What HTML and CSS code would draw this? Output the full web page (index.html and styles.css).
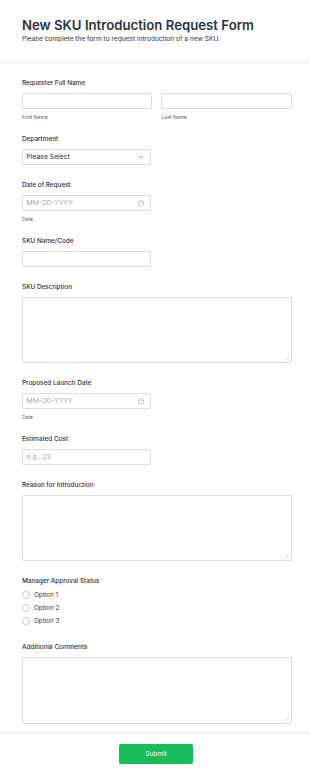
FILE: index.html
```html
<!DOCTYPE html>
<html lang="en">
<head>
<meta charset="utf-8">
<title>New SKU Introduction Request Form</title>
<link rel="stylesheet" href="styles.css">
</head>
<body>
<div class="form">
  <header class="form-header">
    <h1 class="title">New SKU Introduction Request Form</h1>
    <p class="subtitle">Please complete the form to request introduction of a new SKU.</p>
  </header>

  <ul class="fields">
    <li class="field">
      <label class="label">Requester Full Name</label>
      <div class="name-row">
        <div class="name-col">
          <input class="input full" type="text">
          <span class="sublabel">First Name</span>
        </div>
        <div class="name-col">
          <input class="input full" type="text">
          <span class="sublabel">Last Name</span>
        </div>
      </div>
    </li>

    <li class="field">
      <label class="label">Department</label>
      <div class="select half">
        <span>Please Select</span>
        <svg class="chev" width="6" height="4" viewBox="0 0 6 4"><path d="M1 1l2 2 2-2" fill="none" stroke="#7d8597" stroke-width="0.8"/></svg>
      </div>
    </li>

    <li class="field">
      <label class="label">Date of Request</label>
      <div class="date half">
        <span class="ph">MM-DD-YYYY</span>
        <svg class="cal" width="6" height="6" viewBox="0 0 6 6"><rect x="0.5" y="0.8" width="5" height="4.7" rx="0.6" fill="none" stroke="#b5bbc7" stroke-width="0.7"/><path d="M0.5 2.3h5" stroke="#b5bbc7" stroke-width="0.7"/></svg>
      </div>
      <span class="sublabel">Date</span>
    </li>

    <li class="field">
      <label class="label">SKU Name/Code</label>
      <input class="input half" type="text">
    </li>

    <li class="field">
      <label class="label">SKU Description</label>
      <textarea class="textarea"></textarea>
    </li>

    <li class="field">
      <label class="label">Proposed Launch Date</label>
      <div class="date half">
        <span class="ph">MM-DD-YYYY</span>
        <svg class="cal" width="6" height="6" viewBox="0 0 6 6"><rect x="0.5" y="0.8" width="5" height="4.7" rx="0.6" fill="none" stroke="#b5bbc7" stroke-width="0.7"/><path d="M0.5 2.3h5" stroke="#b5bbc7" stroke-width="0.7"/></svg>
      </div>
      <span class="sublabel">Date</span>
    </li>

    <li class="field">
      <label class="label">Estimated Cost</label>
      <input class="input half" type="text" placeholder="e.g., 23">
    </li>

    <li class="field">
      <label class="label">Reason for Introduction</label>
      <textarea class="textarea"></textarea>
    </li>

    <li class="field">
      <label class="label">Manager Approval Status</label>
      <div class="options">
        <div class="option"><span class="radio"></span><span>Option 1</span></div>
        <div class="option"><span class="radio"></span><span>Option 2</span></div>
        <div class="option"><span class="radio"></span><span>Option 3</span></div>
      </div>
    </li>

    <li class="field">
      <label class="label">Additional Comments</label>
      <textarea class="textarea"></textarea>
    </li>
  </ul>

  <div class="submit-row">
    <button class="submit" type="button">Submit</button>
  </div>
</div>
</body>
</html>
```

FILE: styles.css
```css
* { box-sizing: border-box; }

html, body {
  margin: 0;
  padding: 0;
  background: #ffffff;
}

body {
  font-family: Inter, "Noto Sans", "Liberation Sans", sans-serif;
  color: #2c3345;
}

.form {
  width: 310px;
}

.form-header {
  padding: 16px 19px 18px 22px;
  border-bottom: 1px solid #eceef3;
}

.title {
  margin: 0 0 1px;
  font-size: 13.2px;
  line-height: 18px;
  font-weight: 600;
  color: #2c3345;
  letter-spacing: 0;
}

.subtitle {
  margin: 0;
  font-size: 6.6px;
  line-height: 9px;
  color: #2c3345;
}

.fields {
  list-style: none;
  margin: 0;
  padding: 7.5px 19px 0.5px 21.5px;
  border-bottom: 1px solid #eceef3;
}

.field {
  padding: 7px 0 7.5px;
  display: flex;
  flex-direction: column;
  align-items: flex-start;
}

.label {
  display: block;
  font-size: 6.4px;
  line-height: 11px;
  font-weight: 500;
  color: #2c3345;
  margin-bottom: 4px;
  padding-left: 0.5px;
}

.name-row {
  display: flex;
  gap: 9.5px;
  width: 270px;
}

.name-col {
  flex: 1;
  display: flex;
  flex-direction: column;
}

.input, .select, .date, .textarea {
  height: 16.5px;
  border: 1px solid #d8dce5;
  border-radius: 2px;
  background: #fff;
  font-family: inherit;
  font-size: 6.8px;
  color: #2c3345;
  padding: 0 4px;
  margin: 0;
  outline: none;
}

.input::placeholder { color: #a2a9b8; }

.full { width: 100%; }
.half { width: 129.5px; }

.select, .date {
  display: flex;
  align-items: center;
  justify-content: space-between;
  padding: 0 6px 0 4px;
}

.select span { color: #2c3345; }
.date .ph { color: #a2a9b8; }

.sublabel {
  font-size: 5px;
  line-height: 7px;
  color: #57647e;
  margin-top: 5px;
  margin-bottom: -2px;
  padding-left: 0.5px;
}

.textarea {
  width: 270px;
  height: 66.5px;
  padding: 4px;
  display: block;
  resize: none;
  background: #fff linear-gradient(135deg, transparent 42%, #c9cdd5 42%, #c9cdd5 58%, transparent 58%) no-repeat right 1.5px bottom 1.5px / 4px 4px;
}

.options {
  display: flex;
  flex-direction: column;
  margin-top: -2px;
}

.option {
  display: flex;
  align-items: center;
  height: 13px;
  font-size: 6.3px;
  color: #2c3345;
}

.radio {
  width: 8px;
  height: 8px;
  border: 0.8px solid #c3c8d2;
  border-radius: 50%;
  margin-right: 4px;
  margin-left: 0.5px;
}

.submit-row {
  display: flex;
  justify-content: center;
  padding: 11.5px 0 16px 2px;
}

.submit {
  width: 74px;
  height: 19.5px;
  background: #18bd5b;
  border: none;
  border-radius: 2px;
  color: #ffffff;
  font-family: inherit;
  font-size: 6.5px;
  font-weight: 400;
  padding: 0;
}
```
